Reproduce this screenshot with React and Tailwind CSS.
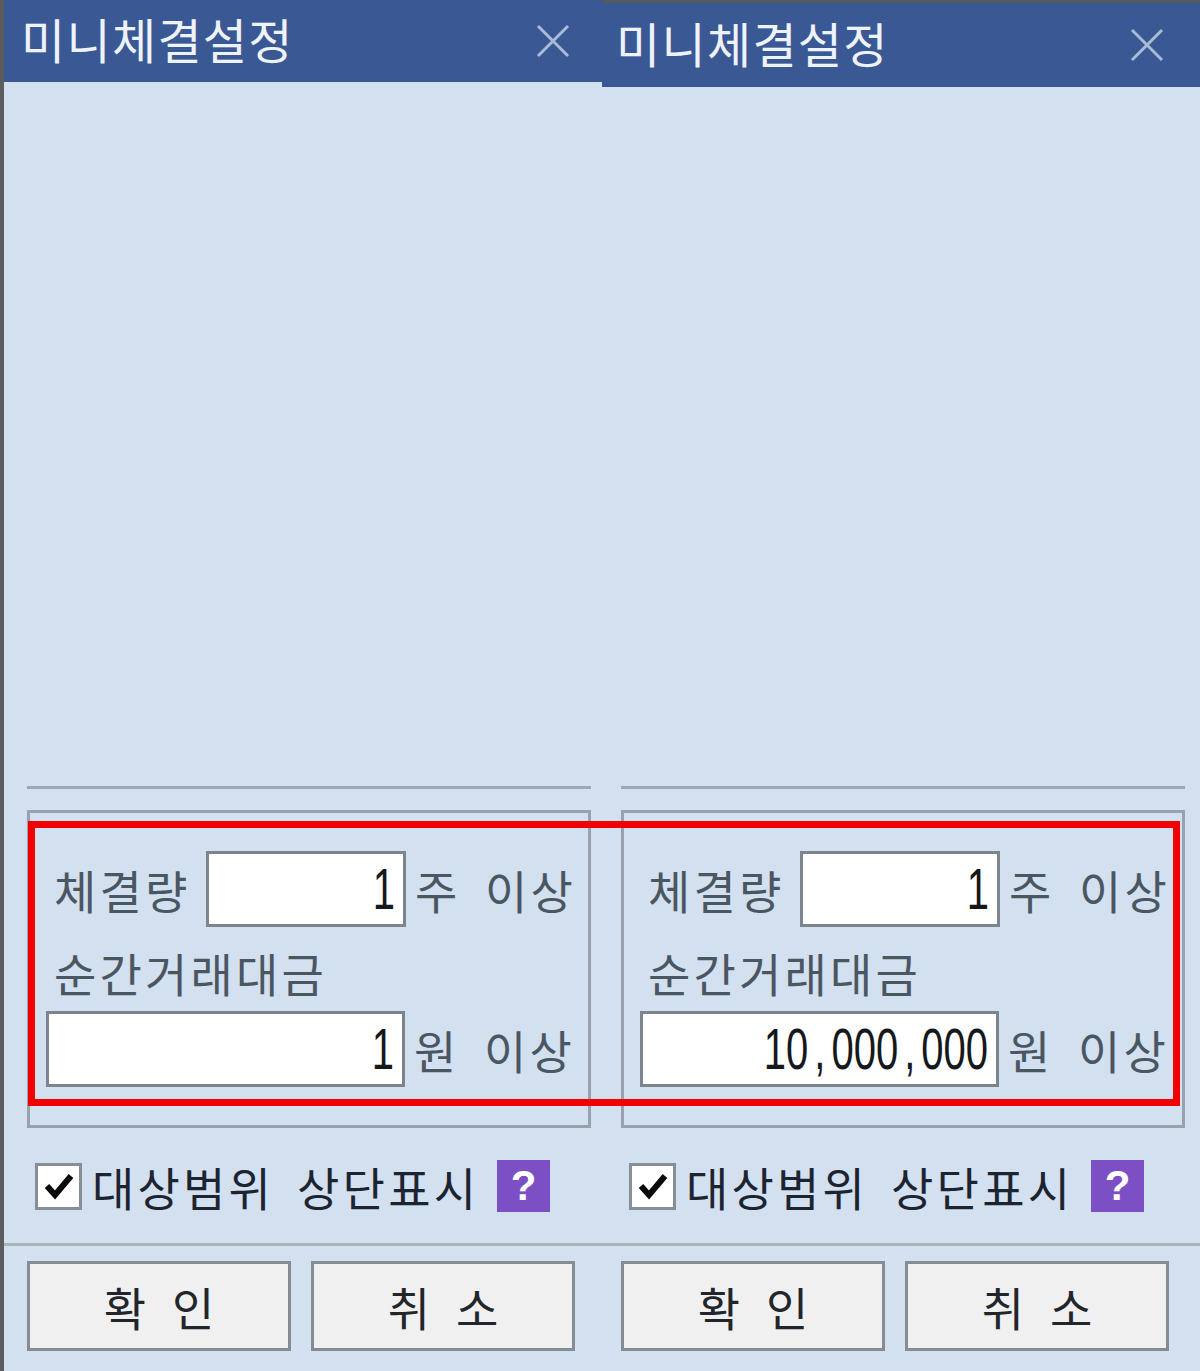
const ko = '"Noto Sans CJK KR", sans-serif';

function Value({ children }) {
  return (
    <span className="inline-flex origin-center scale-y-[1.42] font-['Liberation_Sans',sans-serif] text-[40px] leading-none tracking-normal text-[#15181c]">
      {children.split('').map((c, i) =>
        c === ',' ? (
          <span key={i} className="mx-[6px]">{c}</span>
        ) : (
          <span key={i}>{c}</span>
        )
      )}
    </span>
  );
}

function Field({ className, value }) {
  return (
    <div className={`flex h-[76px] items-center justify-end border-[3px] border-[#7d858c] bg-white pr-[8px] ${className}`}>
      <Value>{value}</Value>
    </div>
  );
}

function Unit({ mark }) {
  return (
    <div className="ml-[9px] flex w-[161px] justify-between whitespace-nowrap text-[#4a5661]">
      <span>{mark}</span>
      <span>이상</span>
    </div>
  );
}

function Btn({ children }) {
  return (
    <button className="flex h-[90px] w-[264px] items-center justify-center gap-[26px] border-[3px] border-[#858c94] bg-[#f0f0f0] tracking-normal text-[#22262b]">
      {children}
    </button>
  );
}

function Panel({ width, leftBar, topBar, titleH, inset, value, titleX, closeMr }) {
  return (
    <div className={`flex h-[1371px] flex-col bg-[#d3e0ef] ${width} ${leftBar ? 'border-l-4 border-[#5c5c5c]' : ''} ${topBar ? 'border-t-[3px] border-t-[#555a60]' : ''}`}>
      <div className={`flex shrink-0 items-center justify-between bg-[#3a5894] ${titleH}`}>
        <span className={`pb-[6px] text-[48px] leading-none tracking-[1.3px] whitespace-nowrap text-[#eef3fa] ${titleX}`}>미니체결설정</span>
        <svg className={`h-[34px] w-[34px] ${closeMr}`} viewBox="0 0 34 34" fill="none" stroke="#a9bbd6" strokeWidth="3">
          <path d="M2 2 L32 32 M32 2 L2 32" />
        </svg>
      </div>

      <div className="mt-auto" />

      <div className={`h-[3px] bg-[#9ea8b2] ${inset}`} />

      <div className={`mt-[21px] h-[318px] border-[3px] border-[#98a2ac] pl-[16px] pt-[38px] ${inset}`}>
        <div className="flex items-center">
          <span className="ml-[8px] w-[152px] whitespace-nowrap text-[#4a5661]">체결량</span>
          <Field className="w-[200px]" value="1" />
          <Unit mark="주" />
        </div>
        <div className="ml-[8px] flex h-[84px] items-center whitespace-nowrap pt-[5px] text-[#4a5661]">순간거래대금</div>
        <div className="flex items-center">
          <Field className="w-[359px]" value={value} />
          <Unit mark="원" />
        </div>
      </div>

      <div className={`mt-[32px] flex h-[52px] items-center ${inset}`}>
        <span className="ml-[8px] flex h-[47px] w-[47px] items-center justify-center border-[3px] border-[#878e95] bg-white">
          <svg className="h-[30px] w-[30px]" viewBox="0 0 30 30" fill="none" stroke="#0a0a0a" strokeWidth="6">
            <path d="M3 15 L11 24 L27 5" />
          </svg>
        </span>
        <span className="ml-[10px] flex gap-[23px] whitespace-nowrap text-[#1b2430]">
          <span>대상범위</span>
          <span>상단표시</span>
        </span>
        <span className="ml-[18px] flex h-[52px] w-[53px] items-center justify-center bg-[#7c4fc4] font-['Liberation_Sans',sans-serif] text-[42px] font-bold leading-none tracking-normal text-white">?</span>
      </div>

      <div className="mt-[31px] h-[3px] bg-[#a9b5b8]" />

      <div className={`mb-[20px] mt-[15px] flex gap-[20px] ${inset}`}>
        <Btn><span>확</span><span>인</span></Btn>
        <Btn><span>취</span><span>소</span></Btn>
      </div>
    </div>
  );
}

export default function App() {
  return (
    <div className="relative flex h-[1371px] w-[1200px] overflow-hidden text-[46px] leading-none tracking-[3.2px]" style={{ fontFamily: ko }}>
      <Panel width="w-[602px]" leftBar titleH="h-[82px]" inset="ml-[23px] mr-[11px]" value="1" titleX="ml-[17px]" closeMr="mr-[32px]" />
      <Panel width="w-[598px]" topBar titleH="h-[84px]" inset="ml-[19px] mr-[15px]" value="10,000,000" titleX="ml-[14px]" closeMr="mr-[36px]" />
      <div className="pointer-events-none absolute left-[28px] top-[821px] h-[285px] w-[1152px] border-[7px] border-[#f00000]" />
    </div>
  );
}
